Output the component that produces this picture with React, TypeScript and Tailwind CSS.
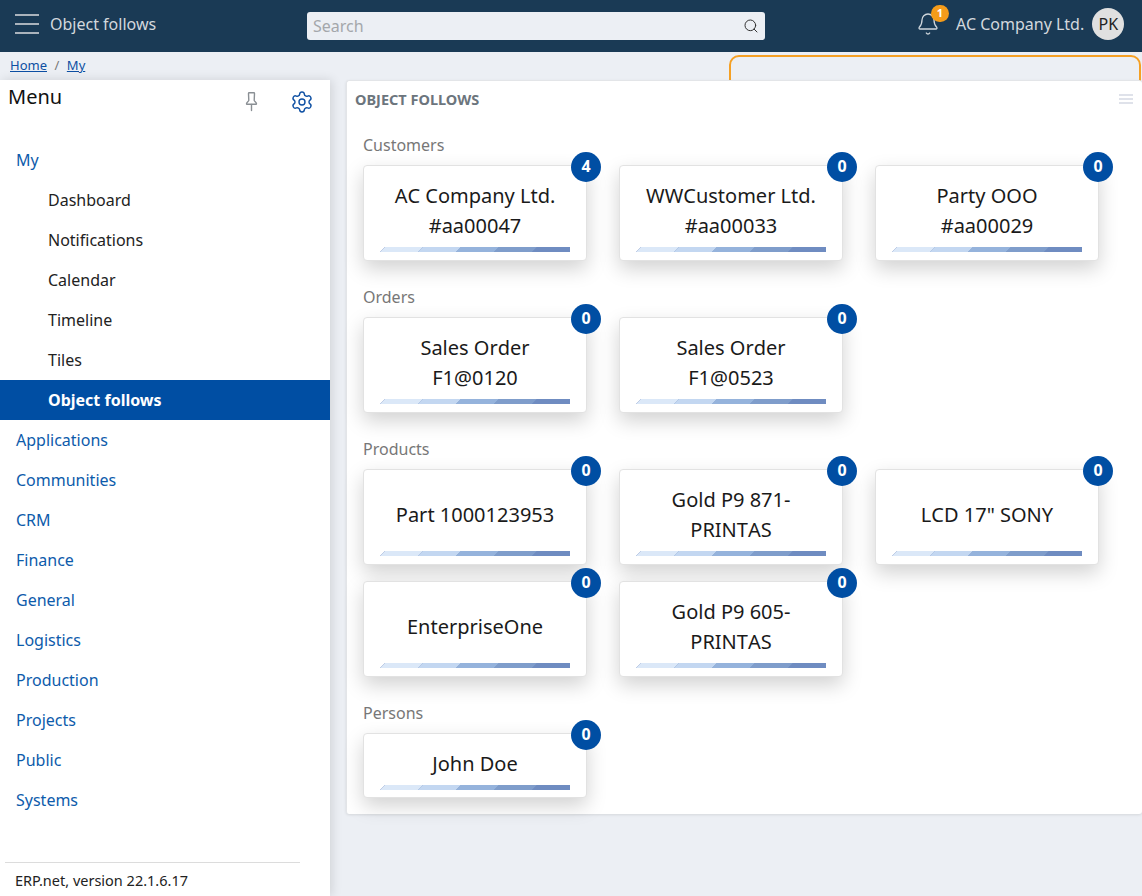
import { Bell, Search, Settings } from 'lucide-react';

type Follow = { title: string[]; count: number };

const topItems = ['Applications', 'Communities', 'CRM', 'Finance', 'General', 'Logistics', 'Production', 'Projects', 'Public', 'Systems'];
const myItems = ['Dashboard', 'Notifications', 'Calendar', 'Timeline', 'Tiles'];

const groups: { name: string; items: Follow[] }[] = [
  {
    name: 'Customers',
    items: [
      { title: ['AC Company Ltd.', '#aa00047'], count: 4 },
      { title: ['WWCustomer Ltd.', '#aa00033'], count: 0 },
      { title: ['Party OOO', '#aa00029'], count: 0 },
    ],
  },
  {
    name: 'Orders',
    items: [
      { title: ['Sales Order', 'F1@0120'], count: 0 },
      { title: ['Sales Order', 'F1@0523'], count: 0 },
    ],
  },
  {
    name: 'Products',
    items: [
      { title: ['Part 1000123953'], count: 0 },
      { title: ['Gold P9 871-', 'PRINTAS'], count: 0 },
      { title: ['LCD 17" SONY'], count: 0 },
      { title: ['EnterpriseOne'], count: 0 },
      { title: ['Gold P9 605-', 'PRINTAS'], count: 0 },
    ],
  },
  {
    name: 'Persons',
    items: [{ title: ['John Doe'], count: 0 }],
  },
];

const barColors = ['bg-[#dbe8f8]', 'bg-[#c3d7f1]', 'bg-[#95b3dc]', 'bg-[#7f9dcb]', 'bg-[#6f8cc1]'];

const FollowCard = ({ item, compact }: { item: Follow; compact: boolean }) => (
  <div className={`relative w-[224px] rounded border border-[#e2e2e2] bg-white pt-[15px] shadow-[0_8px_20px_rgba(0,0,0,0.18)] ${compact ? 'pb-[7px]' : 'pb-[8px]'}`}>
    <div className={`flex flex-col items-center justify-center text-[20px] leading-[30px] text-[#1a1a1a] [font-kerning:none] ${compact ? 'min-h-[30px]' : 'min-h-[60px]'}`}>
      {item.title.map((line) => (
        <span key={line}>{line}</span>
      ))}
    </div>
    <div className="mx-4 mt-[6px] flex h-[5px] overflow-hidden bg-[#6f8cc1] [clip-path:polygon(5px_0,100%_0,100%_100%,0_100%)]">
      {barColors.map((color) => (
        <div key={color} className={`h-full flex-1 translate-x-[2.5px] -skew-x-[45deg] ${color}`} />
      ))}
    </div>
    <div className="absolute -top-[14px] -right-[15px] flex h-[30px] w-[30px] items-center justify-center rounded-full bg-[#004ea3] pb-[2px] text-[16px] font-bold text-white">
      {item.count}
    </div>
  </div>
);

const PinIcon = () => (
  <svg width="13" height="20" viewBox="0 0 13 20" fill="none" stroke="#8a8f94" strokeWidth="1.4" strokeLinejoin="round" strokeLinecap="round">
    <path d="M3.5 1.5c0-.4.3-.7.7-.7h4.6c.4 0 .7.3.7.7L9.2 8.5c.1.6 2.3 1.8 2.3 3.2 0 .4-.3.6-.6.6H2.1c-.3 0-.6-.2-.6-.6 0-1.4 2.2-2.6 2.3-3.2z" />
    <path d="M6.5 12.5V18.5" />
  </svg>
);

export default function App() {
  return (
    <div className="flex h-[896px] w-[1142px] flex-col overflow-hidden bg-[#eceff4] font-['Noto_Sans',sans-serif] text-[16px]">
      <header className="flex h-[52px] shrink-0 items-center bg-[#1a3a55] text-[#d3d8dd]">
        <div className="mb-[4px] ml-[15px] flex w-[24px] flex-col gap-[7px]">
          <div className="h-[2px] bg-[#aab3bc]" />
          <div className="h-[2px] bg-[#aab3bc]" />
          <div className="h-[2px] bg-[#aab3bc]" />
        </div>
        <span className="mb-[4px] ml-[11px] w-[257px] text-[16px]">Object follows</span>
        <div className="flex h-[28px] w-[458px] items-center justify-between rounded-[3px] bg-[#eceff4] pr-[6px] pl-[6px] text-[16px] text-[#a4a7ab]">
          <span>Search</span>
          <Search size={16} strokeWidth={1.5} className="text-[#333]" />
        </div>
        <div className="relative mb-[4px] ml-[151px]">
          <Bell size={24} strokeWidth={1.3} className="text-[#cfd6dc]" />
          <div className="absolute -top-[7px] left-[15px] flex h-[17px] w-[18px] items-center justify-center rounded-full bg-[#f59c1a] text-[11px] font-bold text-white">
            1
          </div>
        </div>
        <span className="mb-[4px] ml-[16px] text-[16px]">AC Company Ltd.</span>
        <div className="mb-[4px] ml-[8px] flex h-[32px] w-[32px] items-center justify-center rounded-full bg-[#e0e0e0] text-[16px] text-[#222]">
          PK
        </div>
      </header>

      <div className="relative flex h-[28px] shrink-0 items-center pl-[10px] text-[13px] text-[#0d4fa3]">
        <span className="underline">Home</span>
        <span className="mx-[7.5px] text-[#777]">/</span>
        <span className="underline">My</span>
        <div className="absolute top-[3px] left-[729px] h-[30px] w-[412px] rounded-t-[10px] border-2 border-[#f5a024]" />
      </div>

      <div className="relative flex min-h-0 flex-1">
        <aside className="z-10 flex w-[330px] shrink-0 flex-col bg-white shadow-[2px_0_10px_rgba(0,0,0,0.12)]">
          <div className="relative h-[60px] shrink-0">
            <span className="absolute top-[2px] left-[8px] text-[20px] text-[#111]">Menu</span>
            <div className="absolute top-[12px] left-[245px]">
              <PinIcon />
            </div>
            <Settings size={24} strokeWidth={1.4} className="absolute top-[10px] left-[290px] text-[#0d4fa3]" />
          </div>
          <nav className="flex flex-col text-[16px]">
            <div className="flex h-[40px] items-center pl-4 text-[#0d5bab]">My</div>
            {myItems.map((item) => (
              <div key={item} className="flex h-[40px] items-center pl-12 text-[#222]">
                {item}
              </div>
            ))}
            <div className="flex h-[40px] items-center bg-[#004ea3] pl-12 font-bold text-white">Object follows</div>
            {topItems.map((item) => (
              <div key={item} className="flex h-[40px] items-center pl-4 text-[#0d5bab]">
                {item}
              </div>
            ))}
          </nav>
          <div className="mt-auto mr-[30px] ml-[5px] h-[34px] border-t border-[#dcdcdc] pt-[8px] pl-[10px] text-[14.5px] leading-[19px] text-[#222]">
            ERP.net, version 22.1.6.17
          </div>
        </aside>

        <main className="z-10 ml-[16px] h-[734px] flex-1 self-start rounded-[3px] border-t border-l border-[#e3e5e8] bg-white pt-[9px] shadow-[0_1px_3px_rgba(0,0,0,0.1)]">
          <div className="flex items-center justify-between pr-[9px] pl-[8px]">
            <span className="text-[14.5px] leading-[18px] font-bold text-[#6c757d]">OBJECT FOLLOWS</span>
            <div className="flex w-[14px] flex-col gap-[2px]">
              <div className="h-[2px] bg-[#dfe2ea]" />
              <div className="h-[2px] bg-[#dfe2ea]" />
              <div className="h-[2px] bg-[#dfe2ea]" />
            </div>
          </div>
          <div className="mt-[25px] flex flex-col gap-[24px] pl-[16px]">
            {groups.map((group) => (
              <section key={group.name}>
                <div className="mb-[8px] text-[16px] leading-[24px] text-[#777]">{group.name}</div>
                <div className="grid grid-cols-[repeat(3,224px)] gap-x-[32px] gap-y-[16px]">
                  {group.items.map((item, i) => (
                    <FollowCard key={i} item={item} compact={group.name === 'Persons'} />
                  ))}
                </div>
              </section>
            ))}
          </div>
        </main>
      </div>
    </div>
  );
}
